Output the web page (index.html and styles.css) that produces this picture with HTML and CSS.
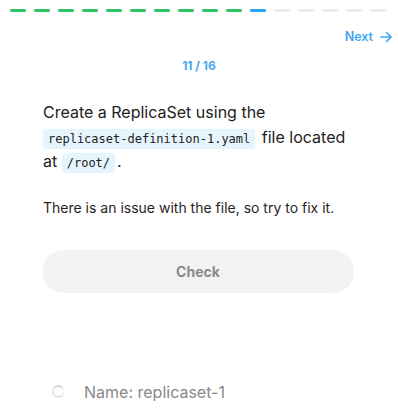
FILE: index.html
```html
<!DOCTYPE html>
<html lang="en">
<head>
  <meta charset="UTF-8" />
  <meta name="viewport" content="width=device-width, initial-scale=1.0"/>
  <title>Lab 11 / 16</title>
  <link rel="stylesheet" href="styles.css">
</head>
<body>

  <div class="progress">
    <span class="step done"></span>
    <span class="step done"></span>
    <span class="step done"></span>
    <span class="step done"></span>
    <span class="step done"></span>
    <span class="step done"></span>
    <span class="step done"></span>
    <span class="step done"></span>
    <span class="step done"></span>
    <span class="step done"></span>
    <span class="step current"></span>
    <span class="step"></span>
    <span class="step"></span>
    <span class="step"></span>
    <span class="step"></span>
    <span class="step"></span>
  </div>

  <div class="nav">
    <a class="next" href="#">Next
      <svg width="12" height="12" viewBox="0 0 12 12" fill="none" stroke="currentColor" stroke-width="1.6" stroke-linecap="round" stroke-linejoin="round">
        <path d="M1 6h10M6.5 1.5L11 6l-4.5 4.5"/>
      </svg>
    </a>
  </div>

  <div class="counter">11 / 16</div>

  <div class="question">
    <p class="task">Create a ReplicaSet using the <code>replicaset-definition-1.yaml</code> file located at <code>/root/</code>.</p>
    <p class="hint">There is an issue with the file, so try to fix it.</p>
    <button class="check">Check</button>
  </div>

  <ul class="checks">
    <li><span class="spinner"></span>Name: replicaset-1</li>
  </ul>

</body>
</html>
```

FILE: styles.css
```css
* {
  box-sizing: border-box;
}

body {
  margin: 0;
  font-family: Inter, 'Noto Sans', sans-serif;
  background: #fff;
  color: #222;
}

.progress {
  display: flex;
  gap: 8px;
  padding: 9px 12px 0 10px;
}

.step {
  flex: 1;
  height: 3px;
  border-radius: 2px;
  background: #ececec;
}

.step.done {
  background: #2cc367;
}

.step.current {
  background: #27a4f2;
}

.nav {
  display: flex;
  justify-content: flex-end;
  padding: 17px 6px 0 0;
}

.next {
  display: flex;
  align-items: center;
  gap: 7px;
  font-size: 12.5px;
  font-weight: 600;
  color: #3ea6f5;
  text-decoration: none;
}

.counter {
  text-align: center;
  margin-top: 14px;
  font-size: 12px;
  font-weight: 700;
  color: #4aa8ef;
}

.question {
  padding: 0 44px 0 42px;
  margin-top: 27px;
}

.task {
  margin: 0;
  font-size: 16px;
  line-height: 24.5px;
  padding-left: 1px;
}

code {
  display: inline-block;
  font-family: 'DejaVu Sans Mono', monospace;
  font-size: 12px;
  line-height: 18px;
  background: #e5f4fd;
  padding: 1px 5px;
  border-radius: 3px;
  margin-right: 2px;
}

.hint {
  margin: 25px 0 0;
  font-size: 14px;
  padding-left: 1px;
  color: #2a1e24;
}

.check {
  display: block;
  width: 100%;
  height: 43px;
  margin-top: 34px;
  border: none;
  border-radius: 22px;
  background: #f3f3f3;
  color: #8a8a8a;
  font-family: inherit;
  font-size: 14px;
  font-weight: 700;
}

.checks {
  list-style: none;
  margin: 89px 0 0;
  padding: 0 0 0 52px;
}

.checks li {
  display: flex;
  align-items: center;
  gap: 19px;
  font-size: 16px;
  color: #888;
}

.spinner {
  width: 13px;
  height: 13px;
  border-radius: 50%;
  border: 2px solid #e4e4e4;
  border-right-color: #f4f4f4;
  border-top-color: #d4d4d4;
}
```
